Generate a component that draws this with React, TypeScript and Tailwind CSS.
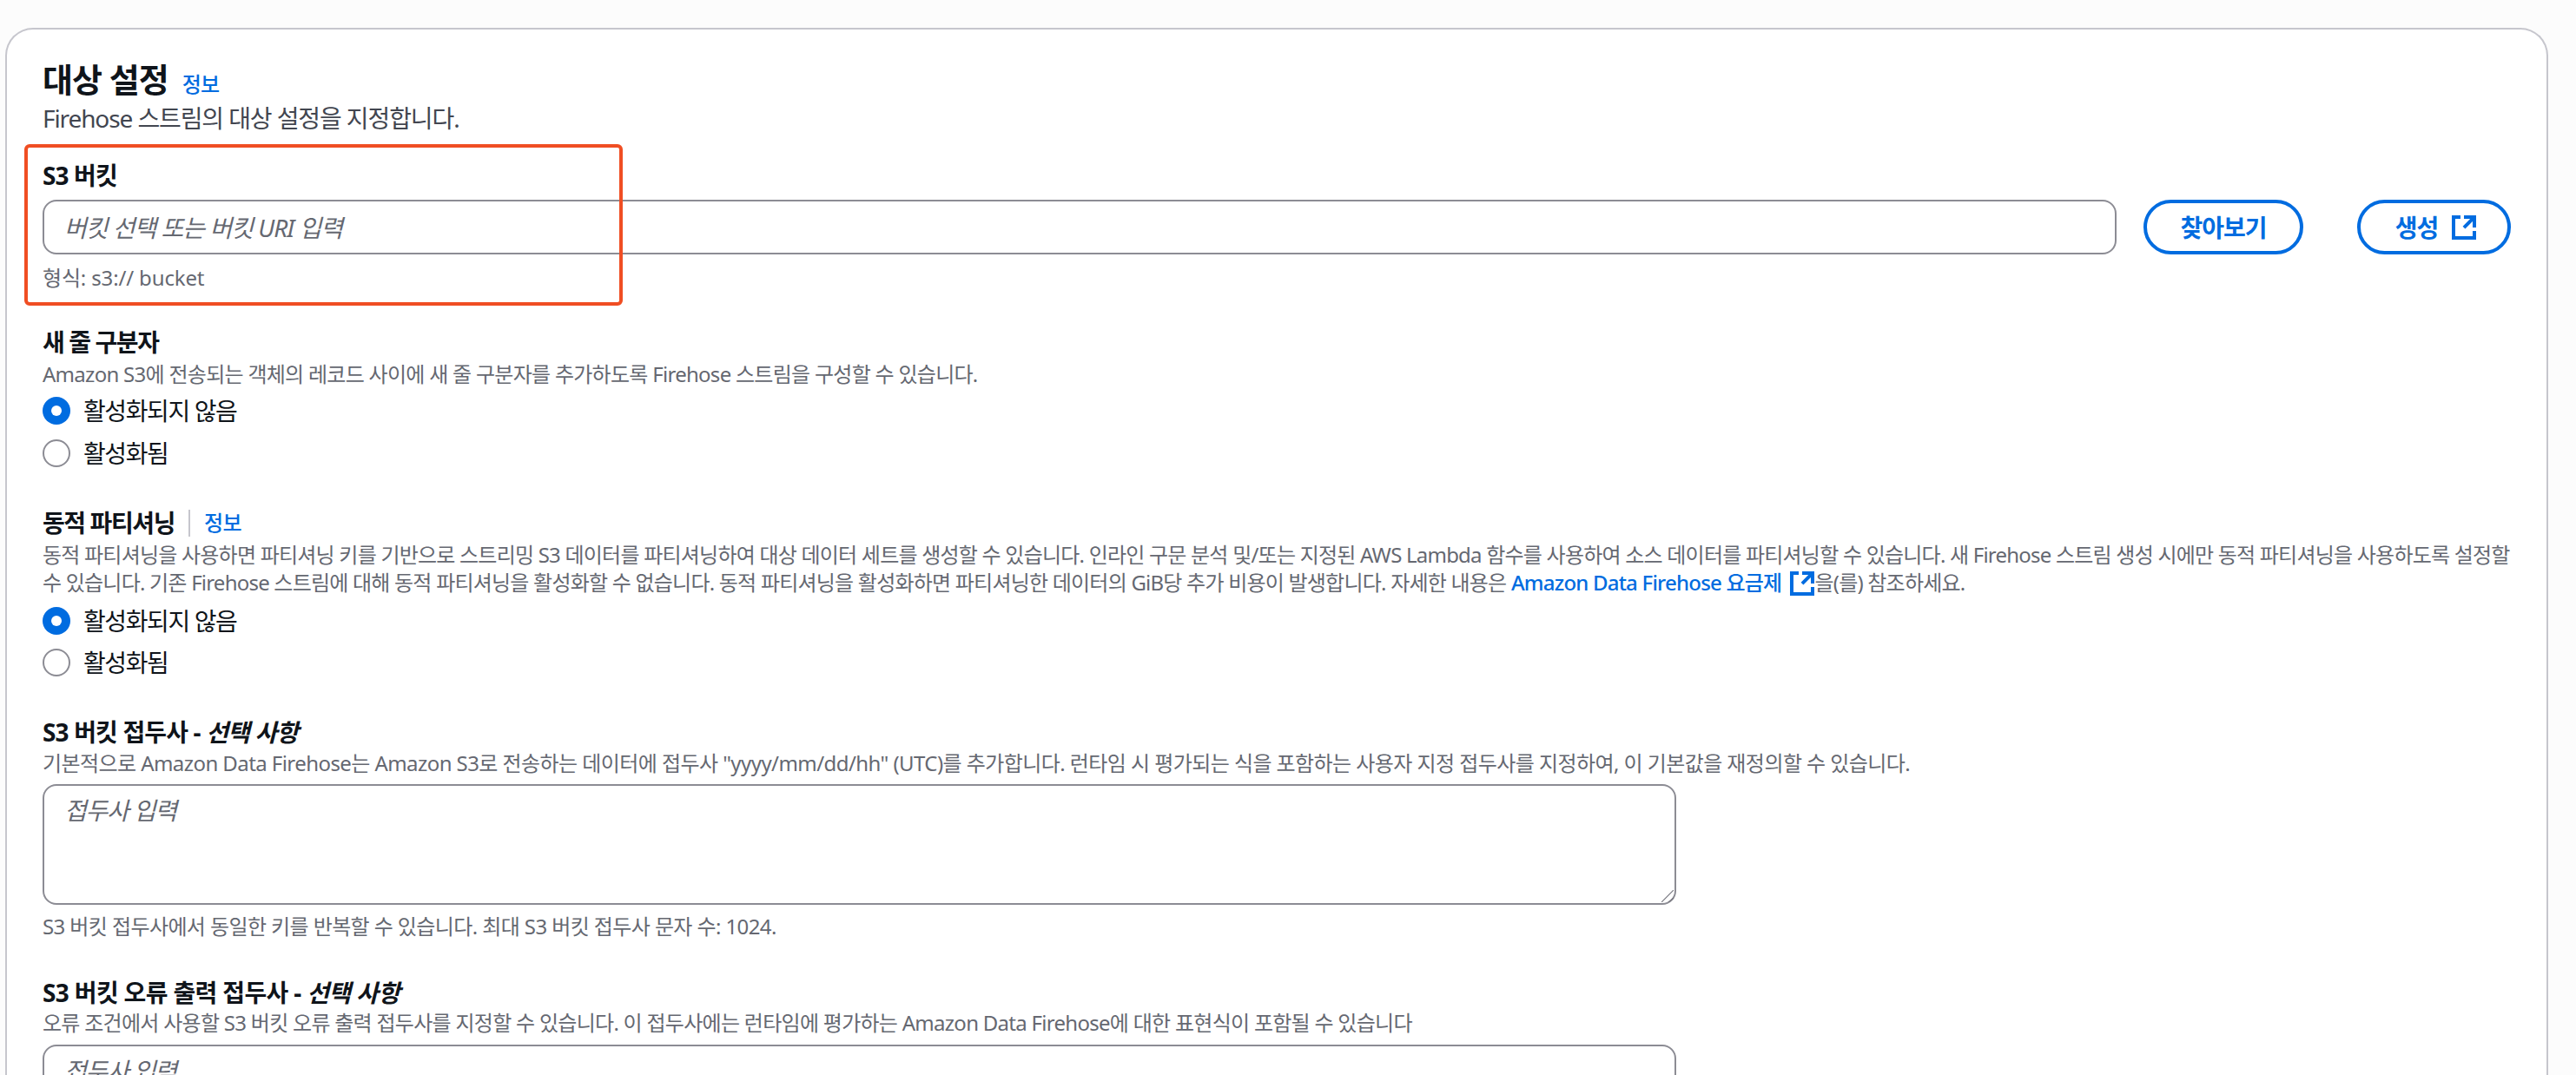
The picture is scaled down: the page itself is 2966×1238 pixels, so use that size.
function ExternalIcon({ className }: { className: string }) {
  return (
    <svg viewBox="1 1 14 14" fill="none" stroke="currentColor" strokeWidth="2" className={className}>
      <path d="M14 8.01v-6H8M14.02 2 8 8.02M6 2.01H2v12h12v-3.99" />
    </svg>
  );
}

function Radio({ label, checked }: { label: string; checked?: boolean }) {
  return (
    <label className="flex h-[40px] items-center gap-[15px] text-[28px] leading-[40px] tracking-[-1.4px] text-[#0f141a]">
      {checked ? (
        <span className="flex h-[32px] w-[32px] items-center justify-center rounded-full bg-[#006ce0]">
          <span className="h-[12px] w-[12px] rounded-full bg-white" />
        </span>
      ) : (
        <span className="h-[32px] w-[32px] rounded-full border-2 border-[#8c8c94] bg-white" />
      )}
      {label}
    </label>
  );
}

// tracking differs per paragraph, the latin/hangul mix sets differently from the reference font
function Help({ children, className = '' }: { children: React.ReactNode; className?: string }) {
  return <p className={`whitespace-nowrap text-[24px] leading-[32px] text-[#656871] ${className}`}>{children}</p>;
}

function FieldLabel({ children, className = 'tracking-[-1.4px]' }: { children: React.ReactNode; className?: string }) {
  return <h3 className={`text-[28px] font-bold leading-[40px] text-[#0f141a] ${className}`}>{children}</h3>;
}

function InfoLink() {
  return <a className="text-[24px] font-medium leading-[32px] tracking-[-0.72px] text-[#006ce0]">정보</a>;
}

function PrefixArea() {
  return (
    <div className="relative w-[1881px]">
      <textarea
        placeholder="접두사 입력"
        className="block h-[139px] w-full resize-none rounded-[16px] border-2 border-[#8c8c94] bg-white px-[23px] py-[8px] text-[28px] leading-[40px] tracking-[-1.2px] outline-none placeholder:italic placeholder:text-[#656871]"
      />
      {/* resize grip */}
      <svg viewBox="0 0 14 14" fill="none" stroke="#77777f" strokeWidth="1.2" className="pointer-events-none absolute bottom-[3px] right-[3px] h-[14px] w-[14px]">
        <path d="M0 14 14 0M8 14l6-5" />
      </svg>
    </div>
  );
}

export default function App() {
  return (
    <div className="flex h-screen flex-col overflow-hidden bg-[#fcfcfc] pl-[6px] pr-[32px] pt-[32px] font-['Noto_Sans','Noto_Sans_CJK_KR',sans-serif]">
      <div className="relative flex-1 rounded-t-[32px] border-x-2 border-t-2 border-[#c6c6cd] bg-white px-[41px] pt-[35px]">
        {/* Header */}
        <div className="flex items-baseline gap-[16px]">
          <h2 className="text-[38px] font-bold leading-[44px] tracking-[-1px] text-[#0f141a]">대상 설정</h2>
          <InfoLink />
        </div>
        <p className="mt-[3px] text-[28px] leading-[40px] tracking-[-1.1px] text-[#424650]">Firehose 스트림의 대상 설정을 지정합니다.</p>

        {/* S3 bucket */}
        <div className="mt-[26px]">
          <FieldLabel className="tracking-[-0.9px]">S3 버킷</FieldLabel>
          <div className="mt-[8px] flex items-center">
            <input
              placeholder="버킷 선택 또는 버킷 URI 입력"
              className="h-[63px] w-[2389px] rounded-[16px] border-2 border-[#8c8c94] bg-white px-[23px] text-[28px] tracking-[-1px] outline-none placeholder:italic placeholder:text-[#656871]"
            />
            <button className="ml-[31px] h-[63px] w-[184px] rounded-full border-4 border-[#006ce0] text-[28px] font-bold tracking-[-1px] text-[#006ce0]">
              찾아보기
            </button>
            <button className="ml-[62px] flex h-[63px] w-[177px] items-center justify-center gap-[16px] rounded-full border-4 border-[#006ce0] pl-[4px] text-[28px] font-bold tracking-[-1px] text-[#006ce0]">
              생성
              <ExternalIcon className="h-[28px] w-[28px]" />
            </button>
          </div>
          <Help className="mt-[11px] tracking-[-0.15px]">형식: s3:// bucket</Help>
        </div>

        {/* Newline delimiter */}
        <div className="mt-[38px]">
          <FieldLabel>새 줄 구분자</FieldLabel>
          <Help className="mt-[1px] tracking-[-0.72px]">Amazon S3에 전송되는 객체의 레코드 사이에 새 줄 구분자를 추가하도록 Firehose 스트림을 구성할 수 있습니다.</Help>
          <div className="mt-[6px] flex flex-col gap-[9px]">
            <Radio label="활성화되지 않음" checked />
            <Radio label="활성화됨" />
          </div>
        </div>

        {/* Dynamic partitioning */}
        <div className="mt-[40px]">
          <div className="flex items-center">
            <FieldLabel>동적 파티셔닝</FieldLabel>
            <span className="mx-[16px] h-[31px] w-[2px] bg-[#c6c6cd]" />
            <InfoLink />
          </div>
          <Help className="mt-[1px] tracking-[-0.78px]">
            동적 파티셔닝을 사용하면 파티셔닝 키를 기반으로 스트리밍 S3 데이터를 파티셔닝하여 대상 데이터 세트를 생성할 수 있습니다. 인라인 구문 분석 및/또는 지정된 AWS Lambda 함수를 사용하여 소스 데이터를 파티셔닝할 수 있습니다. 새 Firehose 스트림 생성 시에만 동적 파티셔닝을 사용하도록 설정할
            <br />
            수 있습니다. 기존 Firehose 스트림에 대해 동적 파티셔닝을 활성화할 수 없습니다. 동적 파티셔닝을 활성화하면 파티셔닝한 데이터의 GiB당 추가 비용이 발생합니다. 자세한 내용은{' '}
            <a className="font-medium text-[#006ce0]">
              Amazon Data Firehose 요금제
              <ExternalIcon className="ml-[10px] inline-block h-[28px] w-[28px] align-[-6px]" />
            </a>
            을(를) 참조하세요.
          </Help>
          <div className="mt-[8px] flex flex-col gap-[8px]">
            <Radio label="활성화되지 않음" checked />
            <Radio label="활성화됨" />
          </div>
        </div>

        {/* S3 prefix */}
        <div className="mt-[40px]">
          <FieldLabel className="tracking-[-0.85px]">
            S3 버킷 접두사 - <em>선택 사항</em>
          </FieldLabel>
          <Help className="tracking-[-0.57px]">기본적으로 Amazon Data Firehose는 Amazon S3로 전송하는 데이터에 접두사 "yyyy/mm/dd/hh" (UTC)를 추가합니다. 런타임 시 평가되는 식을 포함하는 사용자 지정 접두사를 지정하여, 이 기본값을 재정의할 수 있습니다.</Help>
          <div className="mt-[8px]">
            <PrefixArea />
          </div>
          <Help className="mt-[9px] tracking-[-0.6px]">S3 버킷 접두사에서 동일한 키를 반복할 수 있습니다. 최대 S3 버킷 접두사 문자 수: 1024.</Help>
        </div>

        {/* S3 error prefix */}
        <div className="mt-[40px]">
          <FieldLabel className="tracking-[-0.65px]">
            S3 버킷 오류 출력 접두사 - <em>선택 사항</em>
          </FieldLabel>
          <Help className="-mt-[1px] tracking-[-0.72px]">오류 조건에서 사용할 S3 버킷 오류 출력 접두사를 지정할 수 있습니다. 이 접두사에는 런타임에 평가하는 Amazon Data Firehose에 대한 표현식이 포함될 수 있습니다</Help>
          <div className="mt-[9px]">
            <PrefixArea />
          </div>
        </div>

        {/* Highlight annotation */}
        <div className="pointer-events-none absolute left-[20px] top-[132px] h-[186px] w-[689px] rounded-[6px] border-4 border-[#f04e23]" />
      </div>
    </div>
  );
}
